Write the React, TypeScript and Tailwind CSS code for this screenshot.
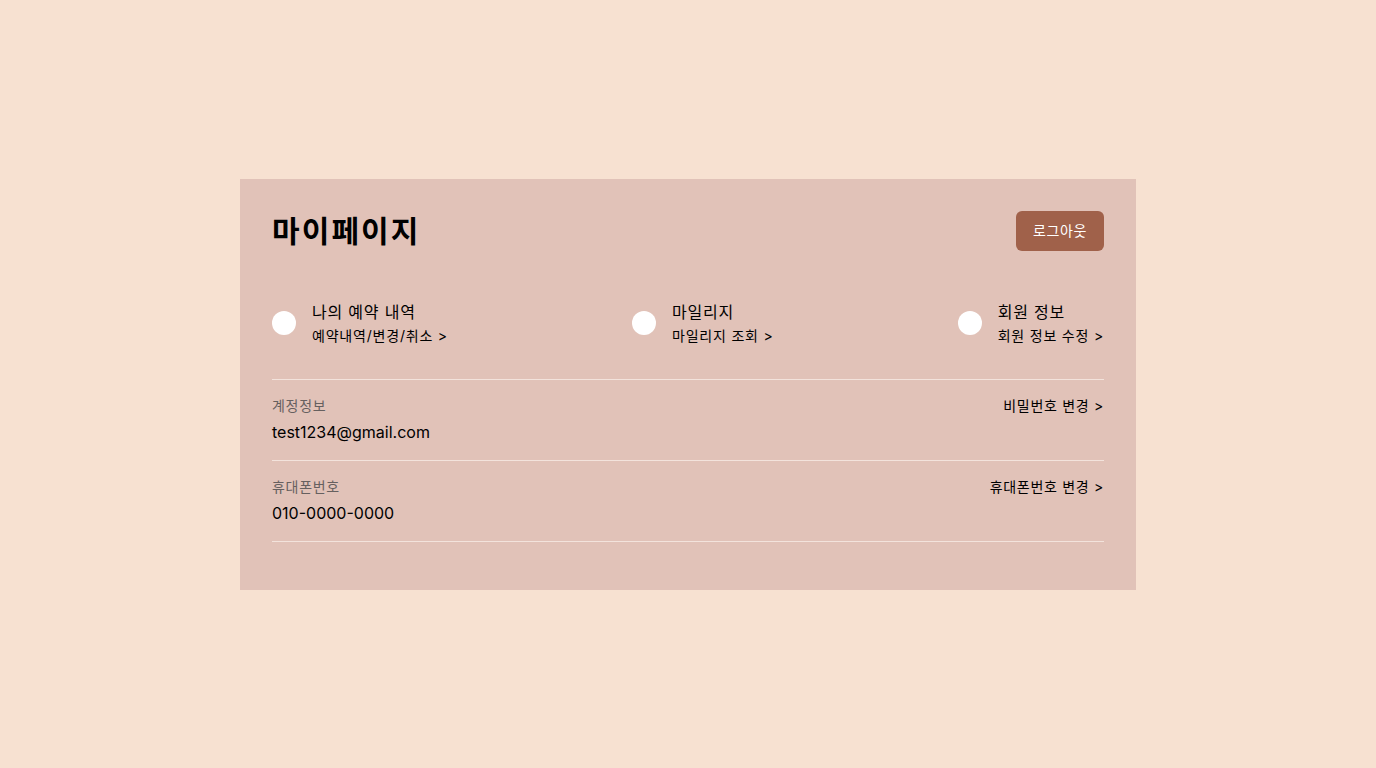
export default function App() {
  const shortcuts = [
    { title: "나의 예약 내역", link: "예약내역/변경/취소 >" },
    { title: "마일리지", link: "마일리지 조회 >" },
    { title: "회원 정보", link: "회원 정보 수정 >" },
  ];

  const rows = [
    { label: "계정정보", value: "test1234@gmail.com", action: "비밀번호 변경 >" },
    { label: "휴대폰번호", value: "010-0000-0000", action: "휴대폰번호 변경 >" },
  ];

  return (
    <div
      className="flex min-h-screen items-center justify-center bg-[#f7e1d1] text-black"
      style={{ fontFamily: "Inter, 'Noto Sans CJK KR', sans-serif" }}
    >
      <div className="w-[896px] bg-[#e1c2b8] px-8 pt-8 pb-12">
        {/* Header */}
        <div className="flex items-center justify-between">
          <h1 className="text-3xl font-bold tracking-[0.07em]">마이페이지</h1>
          <button className="h-10 w-[88px] rounded-md bg-[#a0614a] text-sm tracking-[0.04em] text-white">
            로그아웃
          </button>
        </div>

        {/* Shortcuts */}
        <div className="mt-[49px] flex items-center justify-between pb-[33px]">
          {shortcuts.map((s) => (
            <div key={s.title} className="flex items-center gap-4">
              <div className="h-6 w-6 rounded-full bg-white" />
              <div className="flex flex-col gap-[2px] tracking-[0.05em]">
                <span className="text-base leading-6">{s.title}</span>
                <span className="text-sm leading-5">{s.link}</span>
              </div>
            </div>
          ))}
        </div>

        {/* Account rows */}
        {rows.map((r) => (
          <div
            key={r.label}
            className="flex justify-between border-t border-[#f3e3dc] pt-4 pb-4 last:border-b"
          >
            <div className="flex flex-col gap-1">
              <span className="text-sm leading-5 tracking-[0.05em] text-[#66605f]">
                {r.label}
              </span>
              <span className="text-base leading-6">{r.value}</span>
            </div>
            <span className="text-sm leading-5 tracking-[0.05em]">{r.action}</span>
          </div>
        ))}
      </div>
    </div>
  );
}
